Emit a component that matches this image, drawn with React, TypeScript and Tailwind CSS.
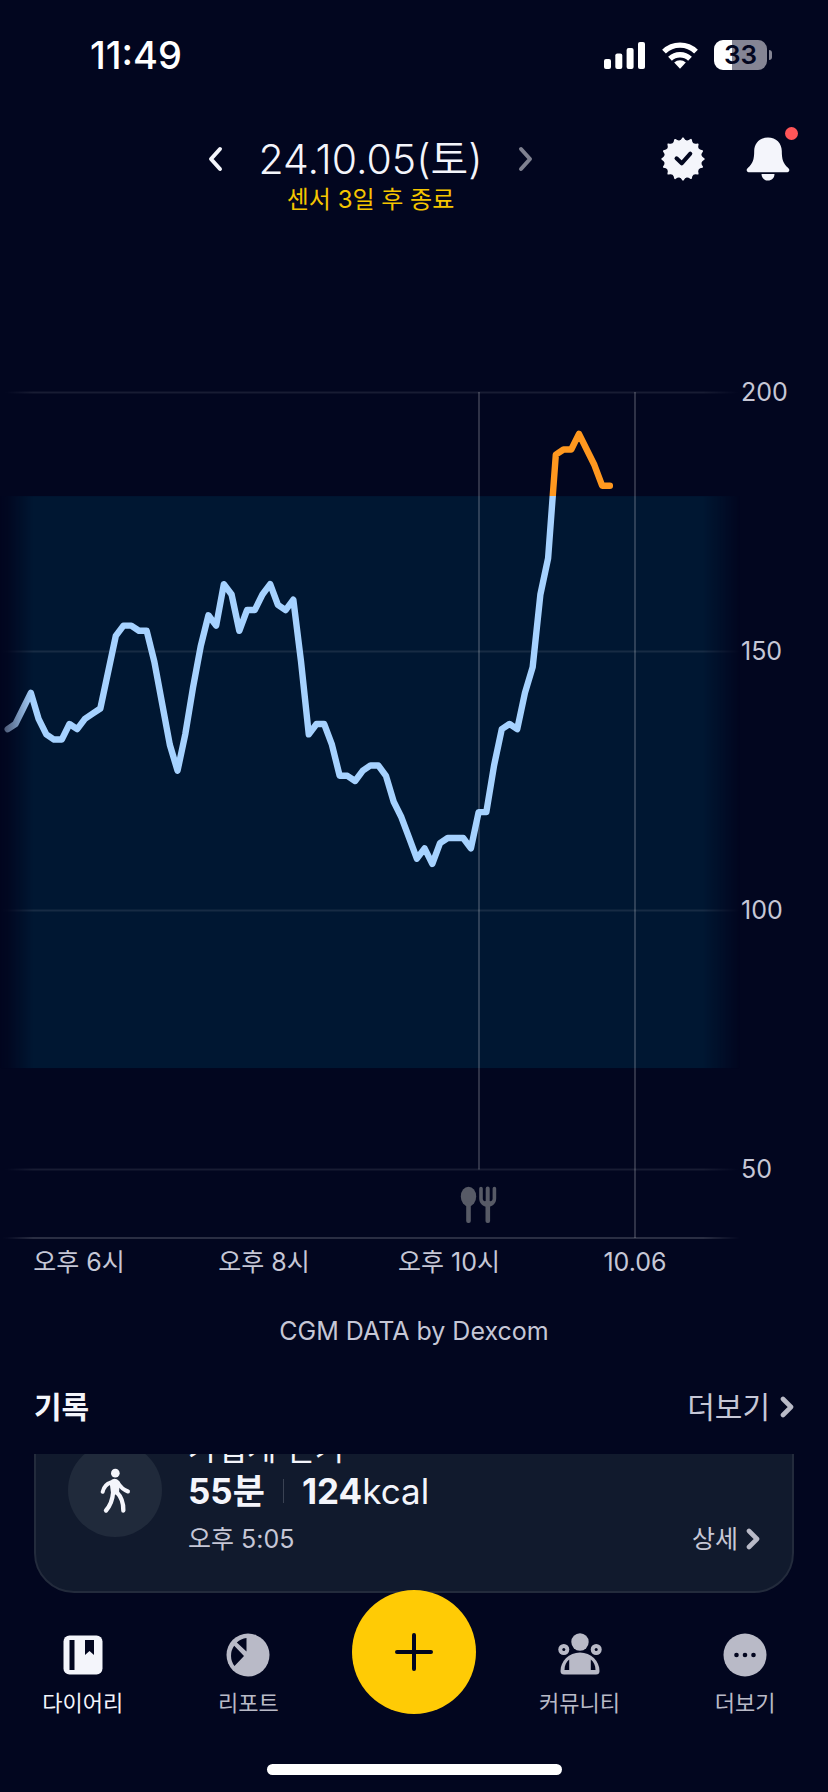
import type { ReactNode } from "react";

// one CGM reading every 5 minutes (mg/dL)
const readings = [
  135, 136, 139, 142, 137, 134, 133, 133, 136, 135, 137, 138, 139, 146, 153, 155,
  155, 154, 154, 148, 140, 132, 127, 134, 143, 151, 157, 155, 163, 161, 154, 158,
  158, 161, 163, 159, 158, 160, 148, 134, 136, 136, 132, 126, 126, 125, 127, 128,
  128, 126, 121, 118, 114, 110, 112, 109, 113, 114, 114, 114, 112, 119, 119, 128,
  135, 136, 135, 142, 147, 161, 168, 188, 189, 189, 192, 189, 186, 182, 182,
];

const levels = [200, 150, 100, 50];

const hours = [
  { label: "오후 6시",  x: 79  },
  { label: "오후 8시",  x: 264 },
  { label: "오후 10시", x: 449 },
  { label: "10.06",     x: 635 },
];

const toX = (i: number) => 7.7 + i * 7.72;
const toY = (v: number) => 33.5 + (200 - v) * 5.18;

const rangeTop = toY(180);
const rangeHeight = 572;

const linePoints = readings.map((v, i) => `${toX(i)},${toY(v)}`).join(" ");

// scalloped badge outline with 16 tips
const badgePath = (() => {
  const at = (r: number, a: number) =>
    `${(22 + r * Math.sin(a)).toFixed(2)} ${(22 - r * Math.cos(a)).toFixed(2)}`;
  let d = `M${at(20.9, 0)}`;
  for (let i = 1; i <= 16; i++) {
    d += `Q${at(15.6, ((i - 0.5) * Math.PI) / 8)} ${at(20.9, (i * Math.PI) / 8)}`;
  }
  return d + "Z";
})();

function Chevron({ dir = "right", className }: { dir?: "left" | "right"; className: string }) {
  return (
    <svg viewBox="0 0 16 26" fill="none" stroke="currentColor" strokeWidth="4" strokeLinecap="round" strokeLinejoin="round" className={className} aria-hidden="true">
      <path d={dir === "left" ? "M13 3 4 13l9 10" : "M3 3l9 10-9 10"} />
    </svg>
  );
}

function SmallChevron() {
  return (
    <svg viewBox="0 0 14 24" fill="none" stroke="#b9bac7" strokeWidth="4.6" strokeLinecap="round" strokeLinejoin="round" className="h-6 w-3.5" aria-hidden="true">
      <path d="M3 4l8 8-8 8" />
    </svg>
  );
}

function StatusBar() {
  return (
    <div className="flex h-[110px] items-center justify-between pl-[90px] pr-14">
      <p className="text-[38px] font-medium leading-none text-white">11:49</p>
      <div className="flex items-center gap-4">
        <svg viewBox="0 0 42 27" fill="#fff" className="h-[27px] w-[42px]" aria-hidden="true">
          <rect x="0" y="17" width="7" height="10" rx="2" />
          <rect x="11.3" y="11.5" width="7" height="15.5" rx="2" />
          <rect x="22.6" y="6" width="7" height="21" rx="2" />
          <rect x="34" y="0" width="7" height="27" rx="2" />
        </svg>
        <svg viewBox="0 0 36 27" className="h-[27px] w-9" aria-hidden="true">
          <g fill="none" stroke="#fff" strokeWidth="5.4">
            <path d="M2 9.6a23 23 0 0 1 32 0" />
            <path d="M8 16.7a14.5 14.5 0 0 1 20 0" />
          </g>
          <path d="M12.2 20.6a8.2 8.2 0 0 1 11.6 0L18 26.8z" fill="#fff" />
        </svg>
        <div className="flex items-center gap-0.5">
          <div className="flex h-[30px] w-[53px] items-center justify-center rounded-[9px] bg-[linear-gradient(90deg,#fff_34%,#858594_34%)] text-[26px] font-semibold leading-none text-[#02061f]">
            33
          </div>
          <span className="h-2.5 w-[3px] rounded-r-full bg-[#858594]" />
        </div>
      </div>
    </div>
  );
}

function Header() {
  return (
    <header className="flex items-start pl-20 pr-[38px] pt-[23px]">
      <div className="flex flex-1 flex-col items-center">
        <div className="flex h-[52px] items-center gap-5">
          <button type="button" aria-label="이전 날짜" className="flex h-12 w-12 items-center justify-center text-[#f4f5fb]">
            <Chevron dir="left" className="h-[26px] w-4" />
          </button>
          <h1 className="whitespace-nowrap text-[41px] font-[350] leading-[52px] text-[#f4f5fb]">24.10.05(토)</h1>
          <button type="button" aria-label="다음 날짜" className="flex h-12 w-12 items-center justify-center text-[#7f8190]">
            <Chevron className="h-[26px] w-4" />
          </button>
        </div>
        <p className="text-[24px] leading-[30px] text-[#f5c500]">센서 3일 후 종료</p>
      </div>
      <div className="flex h-[52px] items-center gap-[41px]">
        <button type="button" aria-label="인증">
          <svg viewBox="0 0 44 44" className="size-11">
            <path d={badgePath} fill="#f4f5fb" stroke="#f4f5fb" strokeWidth="1.6" strokeLinejoin="round" />
            <path d="M15.5 21.3l5.2 5 8.6-9.6" fill="none" stroke="#02061f" strokeWidth="4" strokeLinecap="round" strokeLinejoin="round" />
          </svg>
        </button>
        <button type="button" aria-label="알림" className="relative">
          <svg viewBox="0 0 44 44" fill="#f4f5fb" className="size-11">
            <path d="M22 .5C13.9.5 8.2 6.3 8.2 14c0 8.500-1.400 12.500-6.200 16.800-1 .9-1.300 1.600-1.300 2.500 0 1.100.8 1.900 1.900 1.900h38.800c1.100 0 1.900-.8 1.900-1.900 0-.9-.3-1.600-1.300-2.500C37.200 26.500 35.800 22.500 35.800 14 35.800 6.300 30.100.5 22 .5z" />
            <path d="M15.5 37h13c0 3.800-2.800 6.600-6.500 6.600s-6.500-2.800-6.500-6.600z" />
          </svg>
          <span className="absolute -right-2 -top-2.5 size-[13px] rounded-full bg-[#ff5558]" />
        </button>
      </div>
    </header>
  );
}

function GlucoseChart() {
  return (
    <section className="pt-36">
      <svg viewBox="0 0 828 940" className="h-auto w-full" role="img" aria-label="CGM">
        <defs>
          <linearGradient id="edges" x1="0" x2="740" y1="0" y2="0" gradientUnits="userSpaceOnUse">
            <stop offset="0" stopColor="#fff" stopOpacity="0" />
            <stop offset="0.01" stopColor="#fff" stopOpacity="0.1" />
            <stop offset="0.045" stopColor="#fff" />
            <stop offset="0.95" stopColor="#fff" />
            <stop offset="1" stopColor="#fff" stopOpacity="0" />
          </linearGradient>
          <linearGradient id="lineStart" x1="0" x2="32" y1="0" y2="0" gradientUnits="userSpaceOnUse">
            <stop offset="0.15" stopColor="#4d5b78" />
            <stop offset="1" stopColor="#a6d2ff" />
          </linearGradient>
          <mask id="fade" maskUnits="userSpaceOnUse" x="0" y="0" width="740" height="940">
            <rect width="740" height="940" fill="url(#edges)" />
          </mask>
          <clipPath id="high">
            <rect width="828" height={rangeTop} />
          </clipPath>
          <clipPath id="inRange">
            <rect y={rangeTop} width="828" height={rangeHeight} />
          </clipPath>
        </defs>

        {/* target range and grid */}
        <g mask="url(#fade)">
          <rect y={rangeTop} width="740" height={rangeHeight} fill="#001732" />
          {levels.map((v) => (
            <line key={v} x1="0" x2="740" y1={toY(v)} y2={toY(v)} stroke="#fff" strokeOpacity="0.09" strokeWidth="2" />
          ))}
          <line x1="0" x2="740" y1="879" y2="879" stroke="#fff" strokeOpacity="0.16" strokeWidth="2" />
        </g>
        <line x1="479" x2="479" y1="33" y2={toY(50)} stroke="#fff" strokeOpacity="0.18" strokeWidth="2" />
        <line x1="635" x2="635" y1="33" y2="879" stroke="#fff" strokeOpacity="0.18" strokeWidth="2" />

        {/* readings */}
        <g fill="none" strokeWidth="6.4" strokeLinecap="round" strokeLinejoin="round">
          <polyline points={linePoints} stroke="url(#lineStart)" clipPath="url(#inRange)" />
          <polyline points={linePoints} stroke="#ff981f" clipPath="url(#high)" />
        </g>

        {/* meal marker */}
        <g fill="#575a66">
          <ellipse cx="468.5" cy="837.5" rx="7.7" ry="9.8" />
          <rect x="466.2" y="842" width="4.6" height="22" rx="2" />
          <rect x="485.5" y="845" width="4.6" height="19" rx="2" />
          <path d="M479.200 829.500a1.800 1.800 0 0 1 3.600 0v10.500a2.300 2.300 0 0 0 2.900 2v-12.500a2 2 0 0 1 4 0v12.500a2.300 2.300 0 0 0 2.900-2v-10.500a1.800 1.800 0 0 1 3.600 0v10c0 5-3.800 8.300-8.500 8.300s-8.500-3.300-8.500-8.300z" />
        </g>

        <g fill="#c6c7d6" className="text-[25px]">
          {levels.map((v) => (
            <text key={v} x="741" y={toY(v) + 8}>{v}</text>
          ))}
        </g>
        <g fill="#c6c7d6" textAnchor="middle" className="text-[25px]">
          {hours.map((h) => (
            <text key={h.label} x={h.x} y="912">{h.label}</text>
          ))}
        </g>
      </svg>
      <p className="pt-4 text-center text-[25px] leading-8 text-[#c6c7d6]">CGM DATA by Dexcom</p>
    </section>
  );
}

function Records() {
  return (
    <section className="px-[34px] pt-10">
      <div className="flex h-[67px] items-start justify-between leading-10">
        <h2 className="text-[30px] font-bold text-[#f4f5fb]">기록</h2>
        <a href="#records" className="flex items-center gap-2.5 text-[30px] text-[#c6c7d6]">
          더보기
          <SmallChevron />
        </a>
      </div>

      {/* list is scrolled so that only the end of the last card shows */}
      <div className="flex h-[139px] flex-col justify-end overflow-hidden">
        <article className="flex shrink-0 gap-[26px] rounded-[40px] border-2 border-[#232b3c] bg-[#111a2d] px-8 pb-9 pt-8">
          <div className="mt-3.5 flex size-[94px] shrink-0 items-center justify-center rounded-full bg-[#202a3b]">
            <svg viewBox="0 0 135 140" className="h-[47px] w-[45px]" fill="none" stroke="#f4f5fb" strokeLinecap="round" strokeLinejoin="round" aria-hidden="true">
              <circle cx="67" cy="18" r="13" fill="#f4f5fb" stroke="none" />
              <path d="M54 46 Q60 36 70 40 L76 46 L74 78 L58 78 Z" fill="#f4f5fb" strokeWidth="8" />
              <path d="M54 46 Q34 52 29 74 M74 46 Q86 66 105 73" strokeWidth="12" />
              <path d="M60 78 Q58 108 39 130 M70 74 Q92 96 91 130" strokeWidth="13" />
            </svg>
          </div>
          <div className="flex flex-1 flex-col">
            <h3 className="text-[32px] leading-10 text-[#f4f5fb]">가볍게 걷기</h3>
            <div className="flex h-11 items-center text-[35px] text-[#f4f5fb]">
              <strong className="font-bold">55분</strong>
              <span className="mx-[18px] h-6 w-px bg-[#3a4253]" />
              <strong className="font-bold">124</strong>kcal
            </div>
            <div className="mt-2.5 flex items-center justify-between text-[25px] leading-8 text-[#c6c7d6]">
              <time>오후 5:05</time>
              <a href="#detail" className="flex items-center gap-2">
                상세
                <SmallChevron />
              </a>
            </div>
          </div>
        </article>
      </div>
    </section>
  );
}

function Tab({ label, active, children }: { label: string; active?: boolean; children: ReactNode }) {
  return (
    <a href="#tab" className={`flex flex-col items-center gap-2.5 pt-10 ${active ? "text-[#f4f5fb]" : "text-[#b9bac7]"}`}>
      <svg viewBox="0 0 44 44" fill="currentColor" className="size-11" aria-hidden="true">
        {children}
      </svg>
      <span className="text-[22px] leading-8">{label}</span>
    </a>
  );
}

function BottomNav() {
  return (
    <nav className="grid grid-cols-5 justify-items-center">
      <Tab label="다이어리" active>
        <rect x="2.5" y="2.5" width="39" height="39" rx="6" />
        <path d="M8.500 7h5v30h-5zM24 7h9v15l-4.500-4-4.500 4z" fill="#02061f" />
      </Tab>
      <Tab label="리포트">
        <circle cx="22" cy="22" r="21.5" />
        <path d="M20.500 5v13.500L10.800 9.400A17 17 0 0 1 20.500 5zM8.200 12.800 18 23l-9.500 10A17 17 0 0 1 8.200 12.800z" fill="#02061f" />
      </Tab>
      <button type="button" aria-label="추가" className="relative -mt-[3px] flex size-[124px] items-center justify-center rounded-full bg-[#ffcb05]">
        <svg viewBox="0 0 40 40" stroke="#02061f" strokeWidth="4" strokeLinecap="round" className="size-10">
          <path d="M20 3v34M3 20h34" />
        </svg>
      </button>
      <Tab label="커뮤니티">
        <circle cx="22" cy="9" r="8.7" />
        <circle cx="5.8" cy="16.5" r="5.5" />
        <circle cx="38.2" cy="16.5" r="5.5" />
        <path d="M22 19.500c-11 0-19.500 8.500-19.500 18.500a3.500 3.500 0 0 0 3.500 3.500h32a3.500 3.500 0 0 0 3.500-3.500c0-10-8.500-18.500-19.500-18.500z" />
        <g fill="#02061f">
          <circle cx="5.8" cy="16.5" r="1.5" />
          <circle cx="38.2" cy="16.5" r="1.5" />
          <path d="M11.200 26.500v10.500h-4.700c0-4.500 1.700-8 4.700-10.500zM32.800 26.500v10.500h4.700c0-4.500-1.700-8-4.700-10.500z" />
        </g>
      </Tab>
      <Tab label="더보기">
        <circle cx="22" cy="22" r="21.5" />
        <g fill="#02061f">
          <circle cx="13.5" cy="22" r="2.3" />
          <circle cx="22" cy="22" r="2.3" />
          <circle cx="30.5" cy="22" r="2.3" />
        </g>
      </Tab>
    </nav>
  );
}

export default function App() {
  return (
    <div className="min-h-screen bg-[#02061f] font-['Inter','Noto_Sans_CJK_KR',sans-serif]">
      <StatusBar />
      <Header />
      <main>
        <GlucoseChart />
        <Records />
      </main>
      <BottomNav />
      <div className="flex justify-center pb-4 pt-[45px]">
        <span className="h-[11px] w-[295px] rounded-full bg-white" />
      </div>
    </div>
  );
}
